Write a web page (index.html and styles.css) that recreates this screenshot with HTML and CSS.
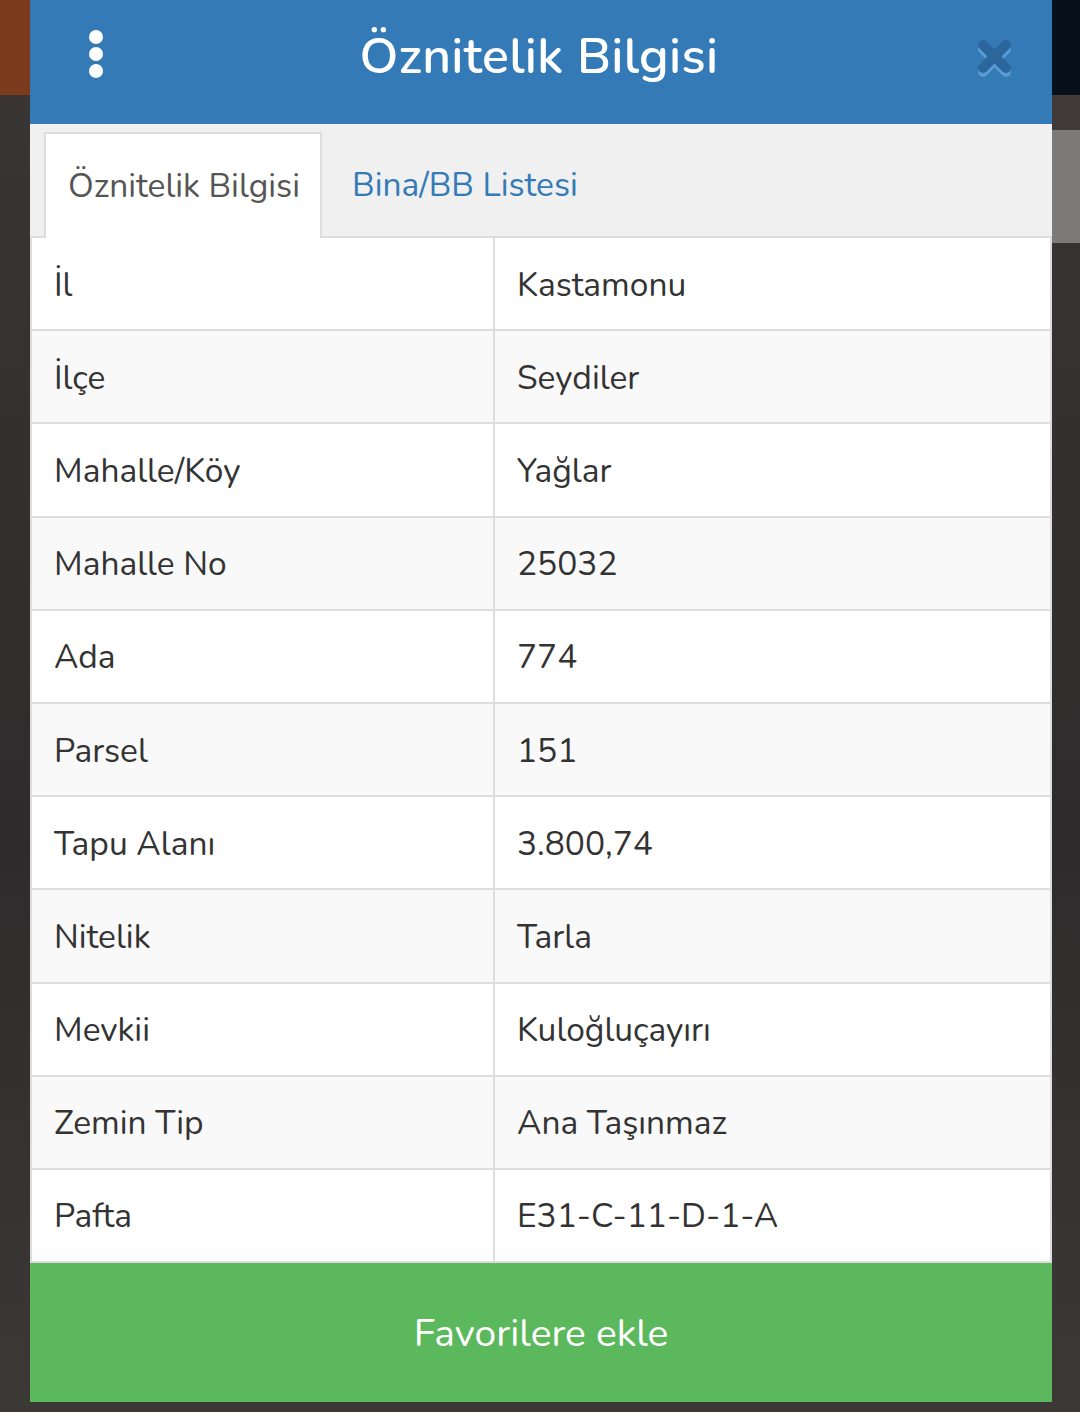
FILE: index.html
```html
<!DOCTYPE html>
<html lang="tr">
<head>
<meta charset="utf-8">
<title>Öznitelik Bilgisi</title>
<link rel="stylesheet" href="styles.css">
</head>
<body>
<div class="stage">
  <div class="modal">
    <div class="header">
      <div class="kebab"><span></span><span></span><span></span></div>
      <div class="title">Öznitelik Bilgisi</div>
      <div class="close">
        <svg width="40" height="42" viewBox="0 0 40 42">
          <g stroke="#5b9bd5" stroke-width="10" stroke-linecap="round">
            <line x1="8" y1="12" x2="31" y2="35"/><line x1="31" y1="12" x2="8" y2="35"/>
          </g>
          <g stroke="#2b679c" stroke-width="10" stroke-linecap="round">
            <line x1="8" y1="8" x2="31" y2="31"/><line x1="31" y1="8" x2="8" y2="31"/>
          </g>
        </svg>
      </div>
    </div>
    <div class="tabs">
      <div class="tab active">Öznitelik Bilgisi</div>
      <div class="tab">Bina/BB Listesi</div>
    </div>
    <div class="table">
      <div class="row"><div class="key">İl</div><div class="val">Kastamonu</div></div>
      <div class="row"><div class="key">İlçe</div><div class="val">Seydiler</div></div>
      <div class="row"><div class="key">Mahalle/Köy</div><div class="val">Yağlar</div></div>
      <div class="row"><div class="key">Mahalle No</div><div class="val">25032</div></div>
      <div class="row"><div class="key">Ada</div><div class="val">774</div></div>
      <div class="row"><div class="key">Parsel</div><div class="val">151</div></div>
      <div class="row"><div class="key">Tapu Alanı</div><div class="val">3.800,74</div></div>
      <div class="row"><div class="key">Nitelik</div><div class="val">Tarla</div></div>
      <div class="row"><div class="key">Mevkii</div><div class="val">Kuloğluçayırı</div></div>
      <div class="row"><div class="key">Zemin Tip</div><div class="val">Ana Taşınmaz</div></div>
      <div class="row"><div class="key">Pafta</div><div class="val">E31-C-11-D-1-A</div></div>
    </div>
    <div class="fav">Favorilere ekle</div>
  </div>
</div>
</body>
</html>
```

FILE: styles.css
```css
* { box-sizing: border-box; }
html, body { margin: 0; padding: 0; }
body {
  width: 1080px;
  height: 1412px;
  overflow: hidden;
  font-family: "Nunito", "Lato", "Noto Sans", sans-serif;
  background:
    linear-gradient(to bottom, #7b3b1c 0, #7b3b1c 95px, transparent 95px) left top / 30px 100% no-repeat,
    linear-gradient(to bottom, #07111c 0, #07111c 95px, #403b39 95px, #403b39 130px, #7b7a78 130px, #7b7a78 243px, transparent 243px) right top / 28px 100% no-repeat,
    linear-gradient(to bottom, #3a3634, #2e2b2c 60%, #3c3836);
}
.stage { padding-left: 30px; }
.modal {
  width: 1022px;
  display: flex;
  flex-direction: column;
}
.header {
  height: 124px;
  background: #337ab7;
  display: flex;
  align-items: center;
  justify-content: space-between;
  padding: 0 37px 0 59px;
}
.kebab {
  width: 14px;
  display: flex;
  flex-direction: column;
  gap: 3px;
  margin-top: -16px;
}
.kebab span {
  width: 14px; height: 14px;
  border-radius: 50%;
  background: #fff;
}
.title {
  color: #fff;
  font-size: 50px;
  font-weight: 600;
  margin-top: -12px;
  letter-spacing: 0.3px;
}
.close { width: 40px; height: 42px; margin-top: -8px; }
.close svg { display: block; }
.tabs {
  background: #f0f0f0;
  padding: 8px 14px 0;
  display: flex;
  border-bottom: 2px solid #dddddd;
  height: 114px;
}
.tab {
  height: 106px;
  display: flex;
  align-items: center;
  padding: 0 24px 0 30px;
  font-size: 33.5px;
  color: #337ab7;
}
.tab.active {
  background: #fff;
  color: #555;
  border: 2px solid #dddddd;
  border-bottom: none;
  height: 106px;
  margin-bottom: -2px;
  width: 278px;
  padding: 0 0 0 22px;
}
.table { display: flex; flex-direction: column; background: #fff; }
.row {
  display: grid;
  grid-template-columns: 463px 1fr;
  height: 93.2px;
  border-bottom: 2px solid #dddddd;
  border-left: 2px solid #dddddd;
  border-right: 2px solid #dddddd;
  color: #333;
  font-size: 33.5px;
}
.row:nth-child(odd) { background: #ffffff; }
.row:nth-child(even) { background: #f9f9f9; }
.key, .val {
  display: flex;
  align-items: center;
  padding-left: 22px;
  padding-top: 2px;
}
.key { border-right: 2px solid #dddddd; }
.fav {
  height: 139px;
  background: #5cb85c;
  color: #fff;
  font-size: 39px;
  display: flex;
  align-items: center;
  justify-content: center;
  padding-top: 2px;
}
```
